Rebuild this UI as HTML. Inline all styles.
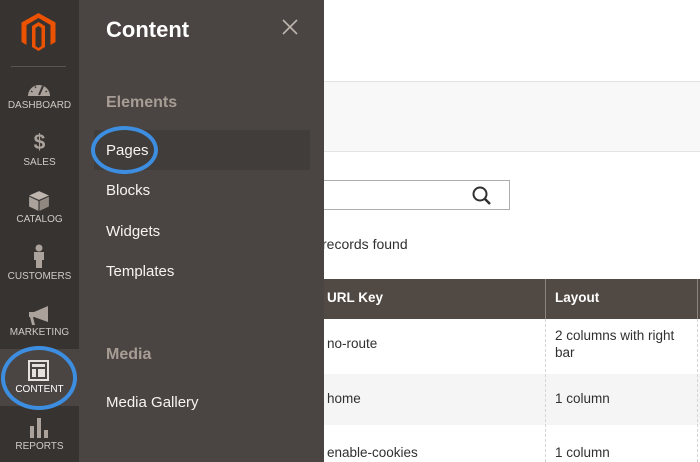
<!DOCTYPE html>
<html><head><style>
*{margin:0;padding:0;box-sizing:border-box}
body{width:700px;height:462px;overflow:hidden;position:relative;background:#fff;font-family:"Liberation Sans",sans-serif}
.abs{position:absolute}
.side{left:0;top:0;width:79px;height:462px;background:#373330}
.item{position:absolute;left:0;width:79px;text-align:center;color:#d0cac5;font-size:10px;letter-spacing:0}
.fly{left:79px;top:0;width:245px;height:462px;background:#4a4542;color:#fff}
.fly .l{position:absolute;left:27px;font-size:15px;color:#f7f3f0}
.fly .h{position:absolute;left:27px;font-size:16px;font-weight:bold;color:#a79d95}
.t{position:absolute;font-size:13.5px;color:#303030}
</style></head><body>
<div class="abs" style="left:324px;top:81px;width:376px;height:71px;background:#f8f8f8;border-top:1px solid #e3e3e3;border-bottom:1px solid #e3e3e3"></div>
<div class="abs" style="left:300px;top:180px;width:210px;height:30px;border:1px solid #adadad;background:#fff"></div>
<svg class="abs" style="left:471px;top:185px" width="22" height="22" viewBox="0 0 22 22"><circle cx="9" cy="9" r="6.5" fill="none" stroke="#303030" stroke-width="2"/><path d="M14 14l5 5" stroke="#303030" stroke-width="2.5"/></svg>
<div class="t" style="left:322px;top:236px;font-size:14px">records found</div>
<div class="abs" style="left:324px;top:279px;width:376px;height:40px;background:#514943"></div>
<div class="t" style="left:327px;top:290px;font-weight:bold;color:#fff">URL Key</div>
<div class="t" style="left:555px;top:290px;font-weight:bold;color:#fff">Layout</div>
<div class="abs" style="left:545px;top:279px;width:1px;height:40px;background:#8a837e"></div>
<div class="abs" style="left:697px;top:279px;width:1px;height:40px;background:#8a837e"></div>
<div class="abs" style="left:324px;top:374px;width:376px;height:51px;background:#f5f5f5"></div>
<div class="abs" style="left:545px;top:319px;height:143px;border-left:1px dashed #d6d6d6"></div>
<div class="abs" style="left:697px;top:319px;height:143px;border-left:1px dashed #d6d6d6"></div>
<div class="t" style="left:327px;top:336px">no-route</div>
<div class="t" style="left:555px;top:327px;line-height:17px">2 columns with right<br>bar</div>
<div class="t" style="left:327px;top:391px">home</div>
<div class="t" style="left:555px;top:391px">1 column</div>
<div class="t" style="left:327px;top:445px">enable-cookies</div>
<div class="t" style="left:555px;top:445px">1 column</div>

<div class="abs side"></div>
<svg class="abs" style="left:21px;top:13px" width="35" height="38" viewBox="0 0 34 38"><path d="M17 0L34 9.5V29L29 32V12L17 5 5 12V32L0 29V9.5Z M17 9L23.5 13V34L17 38 10.5 34V13Z M14 15V33L17 35 20 33V15L17 13Z" fill="#eb5202" fill-rule="evenodd"/></svg>
<div class="abs" style="left:11px;top:66px;width:55px;height:1px;background:#5a5450"></div>
<svg class="abs" style="left:27px;top:80px" width="24" height="17" viewBox="0 0 24 17"><path d="M1 16A11 11 0 0 1 23 16Z" fill="#aaa29b"/><path d="M12 15L16 6" stroke="#373330" stroke-width="2"/><path d="M4 11l1.5 1M8 6.5l1 1.5M20 11l-1.5 1" stroke="#373330" stroke-width="1.2"/></svg>
<div class="item" style="top:100px">DASHBOARD</div>
<div class="item" style="top:131px;font-size:21px;font-weight:bold;color:#aaa29b">$</div>
<div class="item" style="top:157px">SALES</div>
<svg class="abs" style="left:28px;top:190px" width="22" height="22" viewBox="0 0 20 20"><path d="M10 1L19 5 10 9 1 5Z" fill="#bdb5ae"/><path d="M1 6L9.5 10V19L1 15Z" fill="#aaa29b"/><path d="M19 6L10.5 10V19L19 15Z" fill="#8f8780"/></svg>
<div class="item" style="top:214px">CATALOG</div>
<svg class="abs" style="left:32px;top:244px" width="14" height="24" viewBox="0 0 14 24"><circle cx="7" cy="4" r="3.5" fill="#aaa29b"/><path d="M2 8H12V16H10V24H4V16H2Z" fill="#aaa29b"/></svg>
<div class="item" style="top:271px">CUSTOMERS</div>
<svg class="abs" style="left:28px;top:306px" width="22" height="20" viewBox="0 0 22 20"><path d="M1 6H6L20 0V16L6 11H5L7 19H4L2 11H1Z" fill="#aaa29b"/></svg>
<div class="item" style="top:327px">MARKETING</div>
<div class="abs" style="left:0;top:349px;width:79px;height:57px;background:#4a4542"></div>
<svg class="abs" style="left:28px;top:360px" width="21" height="21" viewBox="0 0 21 21"><rect x="1" y="1" width="19" height="19" fill="none" stroke="#e6e1dc" stroke-width="2"/><rect x="4" y="4" width="13" height="3" fill="#e6e1dc"/><rect x="4" y="9" width="4" height="8" fill="#e6e1dc"/><rect x="10" y="9" width="7" height="8" fill="#e6e1dc"/></svg>
<div class="item" style="top:384px;color:#fff">CONTENT</div>
<div class="abs" style="left:1px;top:346px;width:76px;height:64px;border:4px solid #3d8ee0;border-radius:50%"></div>
<svg class="abs" style="left:29px;top:418px" width="20" height="20" viewBox="0 0 20 20"><rect x="1" y="8" width="4" height="12" fill="#aaa29b"/><rect x="8" y="0" width="4" height="20" fill="#aaa29b"/><rect x="15" y="12" width="4" height="8" fill="#aaa29b"/></svg>
<div class="item" style="top:441px">REPORTS</div>

<div class="abs fly">
<div style="position:absolute;left:27px;top:17px;font-size:22px;font-weight:bold">Content</div>
<svg style="position:absolute;left:203px;top:19px" width="16" height="16" viewBox="0 0 16 16"><path d="M1 1L15 15M15 1L1 15" stroke="#bcb4ad" stroke-width="1.6"/></svg>
<div class="h" style="top:94px">Elements</div>
<div style="position:absolute;left:15px;top:130px;width:216px;height:40px;background:#413d3a"></div>
<div class="l" style="top:142px">Pages</div>
<div style="position:absolute;left:12px;top:126px;width:67px;height:48px;border:4px solid #3d8ee0;border-radius:50%"></div>
<div class="l" style="top:182px">Blocks</div>
<div class="l" style="top:223px">Widgets</div>
<div class="l" style="top:263px">Templates</div>
<div class="h" style="top:346px">Media</div>
<div class="l" style="top:394px">Media Gallery</div>
</div>
</body></html>
